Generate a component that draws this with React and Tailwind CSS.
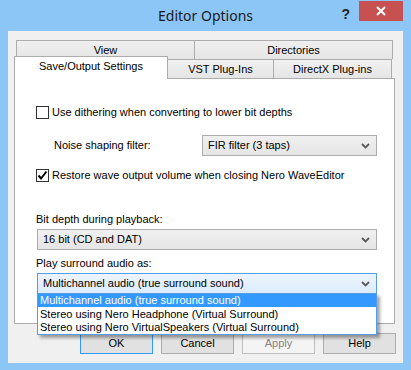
import React from "react";

const font = { fontFamily: '"Liberation Sans", Arial, sans-serif' };

function Chevron() {
  return (
    <svg width="9" height="6" viewBox="0 0 9 6" className="shrink-0">
      <path d="M1 1 L4.5 4.5 L8 1" fill="none" stroke="#5a5a5a" strokeWidth="1.8" />
    </svg>
  );
}

function Combo({ text, active, className = "" }) {
  return (
    <div
      className={`flex h-[21px] items-center justify-between border pl-[5px] pr-[6px] text-[11px] leading-[13px] ${
        active
          ? "border-[#569de5] bg-gradient-to-b from-[#ecf4fc] to-[#dcecfc]"
          : "border-[#acacac] bg-gradient-to-b from-[#f0f0f0] to-[#e5e5e5]"
      } ${className}`}
    >
      <span>{text}</span>
      <Chevron />
    </div>
  );
}

function Checkbox({ checked, label }) {
  return (
    <div className="flex h-[13px] items-center gap-[3px] text-[11px] leading-[13px]">
      <div className="flex h-[13px] w-[13px] items-center justify-center border border-[#333] bg-white">
        {checked && (
          <svg width="11" height="11" viewBox="0 0 11 11">
            <path d="M1.5 5.5 L4 8.5 L9.5 1.5" fill="none" stroke="#000" strokeWidth="2" />
          </svg>
        )}
      </div>
      <span>{label}</span>
    </div>
  );
}

function Button({ children, primary, disabled }) {
  return (
    <div
      className={`flex h-[21px] w-[73px] items-center justify-center border text-[11px] leading-[13px] ${
        primary
          ? "border-[#3399ff] bg-[#e1e1e1]"
          : disabled
          ? "border-[#bfbfbf] bg-[#f4f4f4] text-[#838383]"
          : "border-[#adadad] bg-[#e1e1e1]"
      }`}
    >
      {children}
    </div>
  );
}

export default function App() {
  return (
    <div className="flex h-[370px] w-[411px] flex-col bg-[#8cc6f6] text-black" style={font}>
      {/* title bar */}
      <div className="relative flex h-[31px] shrink-0 items-center justify-center">
        <span className="text-[14px] text-[#1a1a1a]" style={{ fontFamily: '"Noto Sans", "Open Sans", sans-serif' }}>
          Editor Options
        </span>
        <div className="absolute right-[8px] top-[1px] flex items-start">
          <span className="mr-[9px] mt-[3px] text-[14px] font-bold text-[#222]">?</span>
          <div className="flex h-[20px] w-[44px] items-center justify-center bg-[#c75050]">
            <svg width="10" height="10" viewBox="0 0 10 10">
              <path d="M1 1 L9 9 M9 1 L1 9" stroke="#fff" strokeWidth="2" />
            </svg>
          </div>
        </div>
      </div>

      {/* client area */}
      <div className="mx-[8px] mb-[7px] flex flex-1 flex-col bg-[#f0f0f0] pt-[9px]">
        {/* tab row 1 */}
        <div className="ml-[8px] flex h-[19px] w-[377px] text-[11px] leading-[13px]">
          <div className="flex w-[179px] items-start justify-center border border-b-0 border-[#acacac] bg-gradient-to-b from-[#f0f0f0] to-[#e5e5e5] pt-[3px]">
            View
          </div>
          <div className="flex flex-1 items-start justify-center border border-b-0 border-l-0 border-[#acacac] bg-gradient-to-b from-[#f0f0f0] to-[#e5e5e5] pt-[3px]">
            Directories
          </div>
        </div>
        {/* tab row 2 */}
        <div className="relative z-10 ml-[6px] -mt-[3px] flex items-end text-[11px] leading-[13px]">
          <div className="-mb-px flex h-[23px] w-[154px] items-start justify-center border border-b-0 border-[#acacac] bg-white pt-[3px]">
            Save/Output Settings
          </div>
          <div className="flex h-[19px] w-[106px] items-center justify-center border border-b-0 border-l-0 border-[#acacac] bg-gradient-to-b from-[#f0f0f0] to-[#e5e5e5]">
            VST Plug-Ins
          </div>
          <div className="flex h-[19px] w-[118px] items-center justify-center border border-b-0 border-l-0 border-[#acacac] bg-gradient-to-b from-[#f0f0f0] to-[#e5e5e5]">
            DirectX Plug-ins
          </div>
        </div>

        {/* panel */}
        <div className="ml-[6px] flex h-[246px] w-[381px] shrink-0 flex-col border border-[#acacac] bg-white pl-[21px] pt-[27px] text-[11px] leading-[13px]">
          <Checkbox label="Use dithering when converting to lower bit depths" />
          <div className="mt-[16px] flex items-center">
            <span className="ml-[18px] w-[148px]">Noise shaping filter:</span>
            <Combo text="FIR filter (3 taps)" className="w-[175px]" />
          </div>
          <div className="mt-[13px]">
            <Checkbox checked label="Restore wave output volume when closing Nero WaveEditor" />
          </div>
          <div className="mt-[31px]">Bit depth during playback:</div>
          <Combo text="16 bit (CD and DAT)" className="ml-px mt-[3px] w-[340px]" />
          <div className="mt-[7px]">Play surround audio as:</div>
          <div className="relative ml-px mt-[3px] w-[340px]">
            <Combo active text="Multichannel audio (true surround sound)" />
            <div className="absolute left-0 top-[20px] z-20 w-[340px] border border-[#569de5] bg-white shadow-[3px_3px_3px_rgba(0,0,0,0.35)]">
              <div className="h-[13px] bg-[#3399ff] pl-[2px] text-white">Multichannel audio (true surround sound)</div>
              <div className="h-[14px] pl-[2px] leading-[14px]">Stereo using Nero Headphone (Virtual Surround)</div>
              <div className="h-[13px] pl-[2px]">Stereo using Nero VirtualSpeakers (Virtual Surround)</div>
            </div>
          </div>
        </div>

        {/* buttons */}
        <div className="mr-[7px] mt-[9px] flex justify-end gap-[8px]">
          <Button primary>OK</Button>
          <Button>Cancel</Button>
          <Button disabled>Apply</Button>
          <Button>Help</Button>
        </div>
      </div>
    </div>
  );
}
